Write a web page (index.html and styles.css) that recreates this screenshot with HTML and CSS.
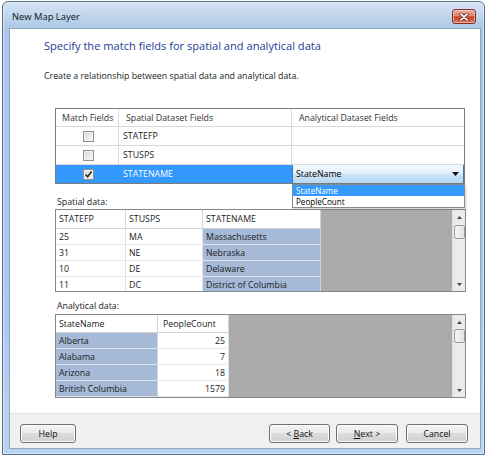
FILE: index.html
```html
<!DOCTYPE html>
<html lang="en">
<head>
<meta charset="utf-8">
<title>New Map Layer</title>
<link rel="stylesheet" href="styles.css">
</head>
<body>
<div class="window">
  <div class="titlebar">
    <span class="title">New Map Layer</span>
    <span class="close" aria-label="Close">
      <svg width="10" height="8" viewBox="0 0 10 8"><path d="M2 1.2 L8 6.8 M8 1.2 L2 6.8" stroke="#5a1a10" stroke-width="3.2" stroke-linecap="round"/><path d="M2 1.2 L8 6.8 M8 1.2 L2 6.8" stroke="#fff" stroke-width="1.8" stroke-linecap="round"/></svg>
    </span>
  </div>
  <div class="client">
    <div class="content">
      <h1 class="heading">Specify the match fields for spatial and analytical data</h1>
      <p class="desc">Create a relationship between spatial data and analytical data.</p>

      <div class="match">
        <div class="mc mh c1">Match Fields</div>
        <div class="mc mh">Spatial Dataset Fields</div>
        <div class="mc mh last">Analytical Dataset Fields</div>

        <div class="mc c1 chk"><span class="cb"></span></div>
        <div class="mc">STATEFP</div>
        <div class="mc last"></div>

        <div class="mc c1 chk"><span class="cb"></span></div>
        <div class="mc">STUSPS</div>
        <div class="mc last"></div>

        <div class="mc c1 chk sel"><span class="cb"><svg width="9" height="9" viewBox="0 0 9 9"><path d="M1.5 4.5 L3.6 6.8 L7.6 1.6" fill="none" stroke="#2b2b2b" stroke-width="1.6"/></svg></span></div>
        <div class="mc sel">STATENAME</div>
        <div class="mc last combo-cell">
          <div class="combo"><span>StateName</span><svg width="7" height="4" viewBox="0 0 7 4"><path d="M0 0 H7 L3.5 4Z" fill="#111"/></svg></div>
        </div>

        <div class="dropdown">
          <div class="opt on">StateName</div>
          <div class="opt">PeopleCount</div>
        </div>
      </div>

      <div class="label">Spatial data:</div>
      <div class="grid sp">
        <div class="gt sp">
          <div class="hc">STATEFP</div><div class="hc">STUSPS</div><div class="hc">STATENAME</div>
          <div class="dc">25</div><div class="dc">MA</div><div class="dc hl">Massachusetts</div>
          <div class="dc">31</div><div class="dc">NE</div><div class="dc hl">Nebraska</div>
          <div class="dc">10</div><div class="dc">DE</div><div class="dc hl">Delaware</div>
          <div class="dc">11</div><div class="dc">DC</div><div class="dc hl">District of Columbia</div>
        </div>
        <div class="filler"></div>
        <div class="vscroll">
          <div class="arr up15"><svg width="5" height="3" viewBox="0 0 5 3"><path d="M0 3 L2.5 0 L5 3Z" fill="#444"/></svg></div>
          <div class="thumb"></div>
          <div class="track"></div>
          <div class="arr dn"><svg width="5" height="3" viewBox="0 0 5 3"><path d="M0 0 L5 0 L2.5 3Z" fill="#444"/></svg></div>
        </div>
      </div>

      <div class="label an">Analytical data:</div>
      <div class="grid an">
        <div class="gt an">
          <div class="hc">StateName</div><div class="hc pc">PeopleCount</div>
          <div class="dc hl">Alberta</div><div class="dc num">25</div>
          <div class="dc hl">Alabama</div><div class="dc num">7</div>
          <div class="dc hl">Arizona</div><div class="dc num">18</div>
          <div class="dc hl">British Columbia</div><div class="dc num">1579</div>
        </div>
        <div class="filler"></div>
        <div class="vscroll">
          <div class="arr up14"><svg width="5" height="3" viewBox="0 0 5 3"><path d="M0 3 L2.5 0 L5 3Z" fill="#444"/></svg></div>
          <div class="thumb"></div>
          <div class="track"></div>
          <div class="arr dn"><svg width="5" height="3" viewBox="0 0 5 3"><path d="M0 0 L5 0 L2.5 3Z" fill="#444"/></svg></div>
        </div>
      </div>
    </div>

    <div class="footer">
      <div class="btn help">Help</div>
      <div class="spacer"></div>
      <div class="btn back">&lt; <u>B</u>ack</div>
      <div class="btn next"><u>N</u>ext &gt;</div>
      <div class="btn cancel">Cancel</div>
    </div>
  </div>
</div>
</body>
</html>
```

FILE: styles.css
```css
* { box-sizing: border-box; }

html, body {
  margin: 0;
  padding: 0;
  background: #ffffff;
}

body {
  font-family: "Open Sans", "Noto Sans", "DejaVu Sans", sans-serif;
  font-size: 8.8px;
  color: #1b1b1b;
}

/* window frame */
.window {
  margin: 1px 0 0 2px;
  width: 483px;
  height: 454px;
  border: 1px solid #566f8e;
  border-radius: 6px 6px 0 0;
  padding: 0 3px 5px 6px;
  display: flex;
  flex-direction: column;
  background: linear-gradient(#d6e4f4 0, #c2d7ee 12px, #abc7e5 27px, #aac7e7 60%, #b9d4f0 100%);
  box-shadow: inset 0 0 0 1px rgba(255, 255, 255, 0.45);
}

.titlebar {
  flex: none;
  height: 26px;
  display: flex;
  align-items: flex-start;
  justify-content: space-between;
}

.title {
  margin: 8px 0 0 3px;
  font-size: 9.4px;
  line-height: 13px;
  color: #111;
}

.close {
  margin: 7px 5px 0 0;
  width: 24px;
  height: 15px;
  border: 1px solid #7f3226;
  border-radius: 3px;
  background: linear-gradient(#eab0a2 0%, #dc826c 45%, #c9472c 52%, #d0603f 80%, #e0896d 100%);
  box-shadow: inset 0 0 0 1px rgba(255, 220, 210, 0.5);
  display: flex;
  align-items: center;
  justify-content: center;
}

/* client area */
.client {
  flex: none;
  height: 421px;
  background: #ffffff;
  border: 1px solid #8ea6c2;
  display: flex;
  flex-direction: column;
}

.content {
  flex: 1;
  padding: 9px 0 0 34px;
}

.heading {
  margin: 0;
  font-size: 11.1px;
  line-height: 16px;
  font-weight: normal;
  color: #1e3c97;
}

.desc {
  margin: 15px 0 0;
  line-height: 14px;
  color: #1b1b1b;
}

/* match fields table */
.match {
  position: relative;
  margin: 25px 0 0 11px;
  width: 410px;
  border: 1px solid #7c7c7c;
  display: grid;
  grid-template-columns: 63px 173px 172px;
  grid-template-rows: 18px 19px 19px 18px;
}

.mc {
  border-right: 1px solid #dadada;
  border-bottom: 1px solid #dadada;
  padding-left: 4px;
  display: flex;
  align-items: center;
  white-space: nowrap;
  overflow: hidden;
  color: #1b1b1b;
}

.mc.last { border-right: none; }

.mh {
  padding-left: 7px;
  color: #333;
}

.mh.c1 { padding-left: 6px; }

.mc.chk {
  justify-content: center;
  padding-left: 3px;
}

.mc.sel {
  background: #3399ff;
  color: #ffffff;
  border-bottom: none;
  border-right-color: #3399ff;
}

.combo-cell {
  padding: 0;
  border-bottom: none;
  position: relative;
}

.combo {
  position: absolute;
  left: 0;
  right: 0;
  top: -1px;
  bottom: -1px;
  border: 1px solid #3d7bad;
  background: linear-gradient(#f3f9fe 0%, #e3f0fb 45%, #c8e2f7 55%, #b8d9f3 100%);
  display: flex;
  align-items: center;
  justify-content: space-between;
  padding: 0 4px 0 3px;
  color: #000;
}

.cb {
  width: 11px;
  height: 11px;
  border: 1px solid #8e8f8f;
  background: linear-gradient(135deg, #d6d7d8, #f7f7f7);
  box-shadow: inset 0 0 0 1px #f2f2f2;
  display: flex;
  align-items: center;
  justify-content: center;
}

.dropdown {
  position: absolute;
  top: calc(100% + 1px);
  left: 236px;
  width: 173px;
  border: 1px solid #8a8a8a;
  background: #ffffff;
  box-shadow: 1px 1px 2px rgba(0, 0, 0, 0.2);
  padding: 0;
}

.opt {
  height: 11px;
  line-height: 11px;
  font-size: 8.1px;
  padding-left: 3px;
  color: #000;
  overflow: hidden;
}

.opt.on {
  background: #3399ff;
  color: #ffffff;
}

/* data grids */
.label {
  width: fit-content;
  margin: 12px 0 0 13px;
  line-height: 13px;
}

.label.an {
  margin-top: 8px;
  margin-bottom: 1px;
}

.grid {
  margin-left: 11px;
  width: 411px;
  border: 1px solid #828790;
  display: flex;
  overflow: hidden;
}

.grid.sp { height: 83px; }
.grid.an { height: 84px; }

.gt {
  flex: none;
  display: grid;
  align-content: start;
}

.gt.sp {
  grid-template-columns: 70px 77px 118px;
  grid-template-rows: 19px repeat(4, 16px);
}

.gt.an {
  grid-template-columns: 102px 71px;
  grid-template-rows: 18px repeat(4, 16px);
}

.hc {
  background: #ffffff;
  border-right: 1px solid #d5d5d5;
  border-bottom: 1px solid #d5d5d5;
  padding-left: 3px;
  display: flex;
  align-items: center;
  white-space: nowrap;
  overflow: hidden;
  color: #222;
}

.hc.pc { padding-left: 5px; }

.dc {
  background: #ffffff;
  border-right: 1px solid #e2e2e2;
  border-bottom: 1px solid #e8e8e8;
  padding-left: 3px;
  display: flex;
  align-items: center;
  white-space: nowrap;
  overflow: hidden;
  color: #1b1b1b;
}

.dc.hl {
  background: #a6bad7;
  border-bottom-color: #dde5f0;
  border-right-color: #c9d4e4;
}

.dc.num {
  justify-content: flex-end;
  padding: 0 3px 0 0;
}

.filler {
  flex: 1;
  background: #ababab;
}

.vscroll {
  flex: none;
  width: 13px;
  background: #ebebeb;
  border-left: 1px solid #e0e0e0;
  display: flex;
  flex-direction: column;
  align-items: center;
}

.arr {
  flex: none;
  width: 100%;
  display: flex;
  align-items: center;
  justify-content: center;
}

.arr.up15 { height: 15px; }
.arr.up14 { height: 14px; }
.arr.dn { height: 13px; }

.thumb {
  flex: none;
  width: 11px;
  height: 14px;
  border: 1px solid #9c9c9c;
  border-radius: 2px;
  background: linear-gradient(to right, #f7f7f7, #e4e4e4);
}

.track { flex: 1; }

/* footer */
.footer {
  flex: none;
  height: 35px;
  background: #f0f0f0;
  border-top: 1px solid #dfdfdf;
  display: flex;
  align-items: flex-start;
  padding: 10px 12px 0 10px;
}

.btn {
  height: 19px;
  border: 1px solid #707070;
  border-radius: 3px;
  background: linear-gradient(#f3f3f3 0%, #ebebeb 45%, #dddddd 50%, #d0d0d0 100%);
  box-shadow: inset 0 0 0 1px #fbfbfb;
  display: flex;
  align-items: center;
  justify-content: center;
  color: #111;
  white-space: pre;
}

.btn u { text-decoration: underline; }

.help { width: 56px; }
.spacer { flex: 1; }
.back { width: 61px; }
.next { width: 62px; margin-left: 6px; }
.cancel { width: 62px; margin-left: 8px; }
```
